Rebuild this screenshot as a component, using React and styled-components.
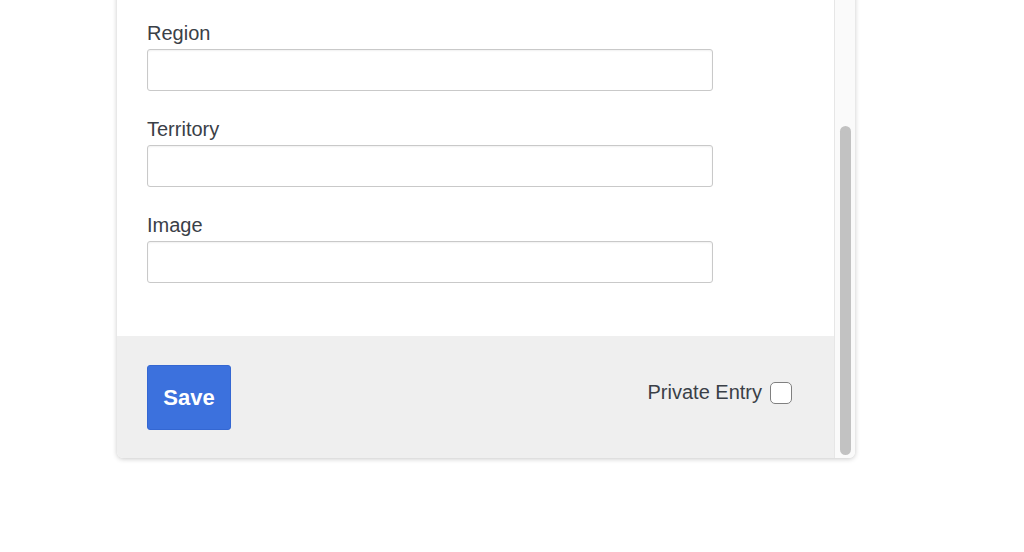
import React from "react";
import styled, { createGlobalStyle } from "styled-components";

const GlobalStyle = createGlobalStyle`
  html, body {
    margin: 0;
    padding: 0;
    background: #ffffff;
    overflow: hidden;
  }
  body {
    font-family: "Liberation Sans", Arial, Helvetica, sans-serif;
  }
`;

const Page = styled.div`
  width: 1024px;
  height: 552px;
  overflow: hidden;
`;

const Panel = styled.div`
  margin: -20px 0 0 117px;
  width: 738px;
  display: flex;
  background: #ffffff;
  border-radius: 6px;
  box-shadow: 0 1px 5px rgba(0, 0, 0, 0.22);
  overflow: hidden;
`;

const Body = styled.div`
  flex: 1;
  display: flex;
  flex-direction: column;
`;

const Form = styled.div`
  padding: 41px 30px 53px;
  display: flex;
  flex-direction: column;
  gap: 26px;
`;

const Field = styled.div`
  display: flex;
  flex-direction: column;
  gap: 4px;
`;

const Label = styled.label`
  font-size: 20px;
  line-height: 24px;
  color: #3a4047;
`;

const Input = styled.input`
  box-sizing: border-box;
  width: 566px;
  height: 42px;
  border: 1px solid #c9c9c9;
  border-radius: 3px;
  background: #ffffff;
  box-shadow: inset 0 1px 2px rgba(0, 0, 0, 0.06);
  font-size: 18px;
  padding: 0 10px;
  outline: none;
`;

const Footer = styled.div`
  background: #efefef;
  padding: 29px 42px 28px 30px;
  display: flex;
  justify-content: space-between;
  align-items: flex-start;
`;

const SaveButton = styled.button`
  box-sizing: border-box;
  width: 84px;
  height: 65px;
  border: 1px solid #3467d2;
  border-radius: 3px;
  background: #3c71dd;
  color: #ffffff;
  font-family: "Liberation Sans", Arial, sans-serif;
  font-weight: 700;
  font-size: 22px;
  cursor: pointer;
`;

const Private = styled.label`
  margin-top: 16px;
  display: flex;
  align-items: center;
  gap: 8px;
  font-size: 20px;
  color: #3a4047;
`;

const Check = styled.span`
  box-sizing: border-box;
  width: 22px;
  height: 22px;
  border: 1px solid #808080;
  border-radius: 5px;
  background: #ffffff;
`;

const Scrollbar = styled.div`
  width: 21px;
  box-sizing: border-box;
  border-left: 1px solid #e6e6e6;
  background: #fafafa;
  display: flex;
  flex-direction: column;
  padding: 146px 4px 3px 5px;
`;

const Thumb = styled.div`
  flex: 1;
  border-radius: 6px;
  background: #c2c2c2;
`;

const fields = ["Region", "Territory", "Image"];

export default function App() {
  return (
    <Page>
      <GlobalStyle />
      <Panel>
        <Body>
          <Form>
            {fields.map((name) => (
              <Field key={name}>
                <Label>{name}</Label>
                <Input type="text" />
              </Field>
            ))}
          </Form>
          <Footer>
            <SaveButton>Save</SaveButton>
            <Private>
              Private Entry
              <Check />
            </Private>
          </Footer>
        </Body>
        <Scrollbar>
          <Thumb />
        </Scrollbar>
      </Panel>
    </Page>
  );
}
